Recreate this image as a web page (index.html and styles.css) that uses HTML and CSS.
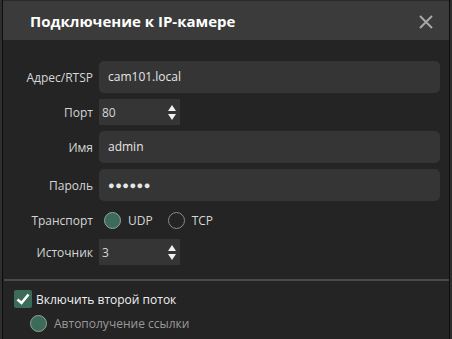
FILE: index.html
```html
<!DOCTYPE html>
<html lang="ru">
<head>
    <meta charset="UTF-8">
    <title>Подключение к IP-камере</title>
    <link rel="stylesheet" href="styles.css">
</head>
<body>

<div class="dialog">
    <!-- Заголовок окна -->
    <div class="header">
        <div class="title">Подключение к IP-камере</div>
        <svg class="close" width="14" height="14" viewBox="0 0 14 14">
            <path d="M1 1 L13 13 M13 1 L1 13" stroke="#a8a8a8" stroke-width="2" fill="none"/>
        </svg>
    </div>

    <!-- Параметры подключения -->
    <div class="form">
        <label class="label">Адрес/RTSP</label>
        <div class="input">cam101.local</div>

        <label class="label">Порт</label>
        <div class="spin">
            <span>80</span>
            <span class="arrows"><i class="up"></i><i class="down"></i></span>
        </div>

        <label class="label">Имя</label>
        <div class="input">admin</div>

        <label class="label">Пароль</label>
        <div class="input dots">&#9679;&#9679;&#9679;&#9679;&#9679;&#9679;</div>

        <label class="label">Транспорт</label>
        <div class="radios">
            <span class="radio checked"></span><span class="radio-text">UDP</span>
            <span class="radio"></span><span class="radio-text">TCP</span>
        </div>

        <label class="label">Источник</label>
        <div class="spin">
            <span>3</span>
            <span class="arrows"><i class="up"></i><i class="down"></i></span>
        </div>
    </div>

    <div class="separator"></div>

    <div class="check-row">
        <span class="checkbox">
            <svg width="18" height="18" viewBox="0 0 18 18">
                <path d="M3.5 9.5 L7.5 13 L14.5 4.5" stroke="#fff" stroke-width="2.6" fill="none"/>
            </svg>
        </span>
        <span>Включить второй поток</span>
    </div>
    <div class="sub-row">
        <span class="radio checked"></span>
        <span class="muted">Автополучение ссылки</span>
    </div>
</div>

</body>
</html>
```

FILE: styles.css
```css
body {
    margin: 0;
    background-color: #2e2e2e;
    font-family: "Open Sans", "Noto Sans", sans-serif;
    font-size: 12px;
    color: #d6d6d6;
}

.dialog {
    width: 446px;
    height: 339px;
    margin-left: 2px;
    border-left: 1px solid #0e0e0e;
    border-right: 1px solid #0e0e0e;
    background-color: #242424;
    overflow: hidden;
}

.header {
    height: 40px;
    background-color: #3b3b3b;
    border-top: 1px solid #2a2a2a;
    box-sizing: border-box;
    display: flex;
    align-items: center;
    justify-content: space-between;
    padding: 0 16px 0 27px;
}

.title {
    font-size: 15px;
    font-weight: bold;
    color: #fff;
}

.close {
    margin-top: 2px;
}

.form {
    display: grid;
    grid-template-columns: 90px 1fr;
    column-gap: 6px;
    row-gap: 6px;
    padding: 21px 9px 0 0;
    align-items: center;
}

.label {
    text-align: right;
}

.input {
    height: 32px;
    line-height: 32px;
    background-color: #353535;
    border-radius: 5px;
    padding-left: 9px;
    color: #e6e6e6;
}

.dots {
    font-size: 11px;
    letter-spacing: 0.5px;
}

.spin {
    width: 81px;
    height: 26px;
    background-color: #353535;
    display: flex;
    align-items: center;
    justify-content: space-between;
    padding-left: 3px;
    box-sizing: border-box;
}

.arrows {
    display: flex;
    flex-direction: column;
    gap: 3px;
    margin-right: 4px;
}

.arrows i {
    width: 0;
    height: 0;
    border-left: 4px solid transparent;
    border-right: 4px solid transparent;
}

.arrows .up {
    border-bottom: 6px solid #f0f0f0;
}

.arrows .down {
    border-top: 6px solid #f0f0f0;
}

.radios {
    height: 26px;
    display: flex;
    align-items: center;
    padding-left: 5px;
}

.radio {
    width: 15px;
    height: 15px;
    border: 1px solid #8a8a8a;
    border-radius: 50%;
    box-sizing: content-box;
    flex-shrink: 0;
}

.radio.checked {
    background-color: #3d6b59;
    border-color: #8fa69c;
}

.radio-text {
    margin: 0 15px 0 7px;
}

.separator {
    height: 2px;
    background-color: #4a4a4a;
    margin: 14px 0 0 1px;
}

.check-row {
    display: flex;
    align-items: center;
    gap: 4px;
    padding: 9px 0 0 11px;
    color: #f0f0f0;
}

.checkbox {
    width: 18px;
    height: 18px;
    background-color: #3d6b59;
    border-radius: 2px;
    display: flex;
}

.sub-row {
    display: flex;
    align-items: center;
    gap: 7px;
    padding: 7px 0 0 27px;
}

.muted {
    color: #9a9a9a;
}
```
